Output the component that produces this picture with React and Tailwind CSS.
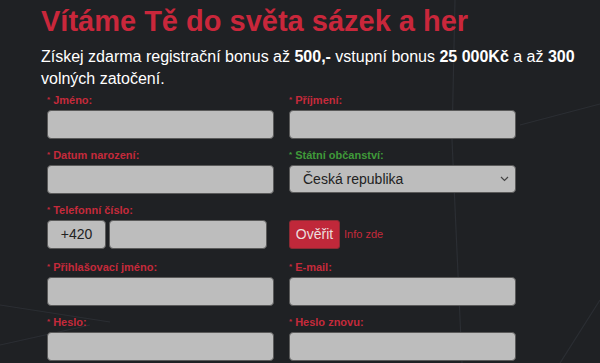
import React from "react";

const F = { fontFamily: '"Liberation Sans", Arial, sans-serif' };

function Label({ children, green }) {
  return (
    <div className={`h-[14px] mb-[3px] text-[11px] leading-[14px] font-bold ${green ? "text-[#3f9a3a]" : "text-[#c52a3b]"}`}>
      <span className="text-[8px] align-top mr-[3px]">*</span>
      {children}
    </div>
  );
}

function Input() {
  return <div className="h-[29px] rounded-[4px] bg-[#bdbdbd] border border-[#5a5a5a]" />;
}

function Field({ label, green, children, mb = "mb-[9px]" }) {
  return (
    <div className={mb}>
      <Label green={green}>{label}</Label>
      {children || <Input />}
    </div>
  );
}

export default function App() {
  return (
    <div style={F} className="relative w-[600px] h-[363px] overflow-hidden bg-[#1f2124]">
      <svg className="absolute inset-0 pointer-events-none" width="600" height="363">
        <g stroke="#2b2e33" strokeWidth="1.2" fill="none">
          <line x1="520" y1="125" x2="600" y2="104" />
          <line x1="452" y1="140" x2="462" y2="363" />
          <line x1="455" y1="0" x2="452" y2="140" />
          <line x1="0" y1="305" x2="110" y2="322" />
          <line x1="0" y1="345" x2="90" y2="325" />
          <line x1="560" y1="363" x2="600" y2="300" />
        </g>
      </svg>
      <div className="relative pl-[41px] pt-[4px]">
        <h1 className="text-[29px] leading-[34px] font-bold text-[#c9273b]">
          Vítáme Tě do světa sázek a her
        </h1>
        <p className="mt-[8px] text-[16px] leading-[22px] text-white w-[545px]">
          Získej zdarma registrační bonus až <b>500,-</b> vstupní bonus <b>25 000Kč</b> a až <b>300</b> volných zatočení.
        </p>
        <div className="mt-[3px] pl-[6px] grid grid-cols-[227px_227px] gap-x-[15px]">
          <Field label="Jméno:" />
          <Field label="Příjmení:" />
          <Field label="Datum narození:" />
          <Field label="Státní občanství:" green>
            <div className="h-[28px] rounded-[4px] bg-[#bdbdbd] border border-[#5a5a5a] flex items-center justify-between pl-[13px] pr-[6px] text-[14px] text-[#222]">
              <span>Česká republika</span>
              <svg width="9" height="6" viewBox="0 0 9 6">
                <path d="M1 1 L4.5 4.5 L8 1" stroke="#444" strokeWidth="1.2" fill="none" />
              </svg>
            </div>
          </Field>
          <Field label="Telefonní číslo:" mb="mb-[11px]">
            <div className="flex gap-[3px] w-[220px]">
              <div className="w-[59px] h-[29px] rounded-[4px] bg-[#bdbdbd] border border-[#5a5a5a] flex items-center justify-center text-[14px] text-[#222]">
                +420
              </div>
              <div className="flex-1 h-[29px] rounded-[4px] bg-[#bdbdbd] border border-[#5a5a5a]" />
            </div>
          </Field>
          <div className="mb-[11px] pt-[17px] flex items-center">
            <div className="w-[51px] h-[29px] rounded-[3px] bg-[#c0283a] border border-[#8a2a33] flex items-center justify-center text-[14px] text-[#ecdede]">
              Ověřit
            </div>
            <span className="ml-[4px] text-[11px] text-[#c52a3b]">Info zde</span>
          </div>
          <Field label="Přihlašovací jméno:" />
          <Field label="E-mail:" />
          <Field label="Heslo:" />
          <Field label="Heslo znovu:" />
        </div>
      </div>
    </div>
  );
}
